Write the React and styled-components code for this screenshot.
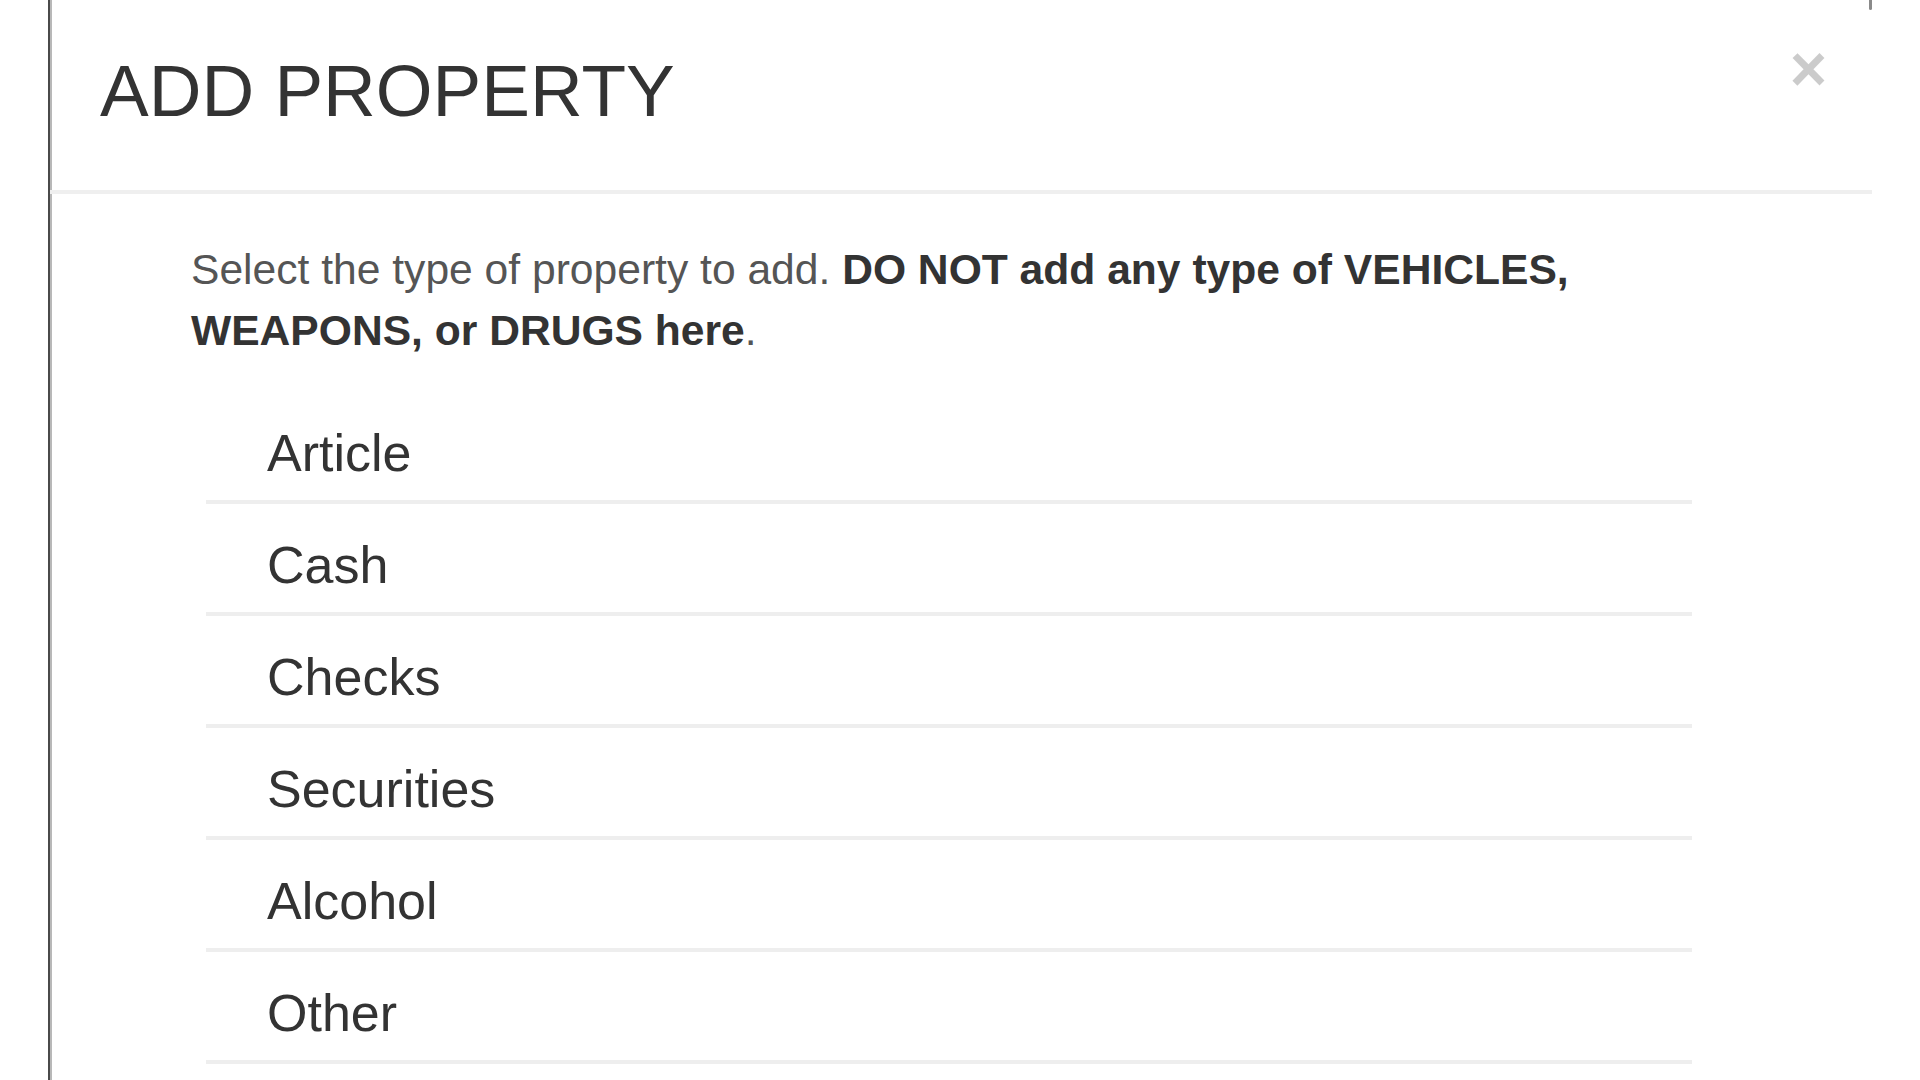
import React from 'react';
import styled, { createGlobalStyle } from 'styled-components';

const GlobalStyle = createGlobalStyle`
  html, body {
    margin: 0;
    padding: 0;
    background: #fff;
    overflow: hidden;
  }
  body {
    font-family: "Liberation Sans", Arial, Helvetica, sans-serif;
    color: #333;
  }
`

const Page = styled.div`
  width: 1920px;
  height: 1080px;
  padding-left: 48px;
  box-sizing: border-box;
  overflow: hidden;
  background: #fff;
`

const Modal = styled.div`
  position: relative;
  width: 1824px;
  min-height: 1080px;
  box-sizing: border-box;
  background: #fff;
  border-left: 2px solid #4a4a4a;
  box-shadow: inset 2px 0 0 #b8b8b8;
  &::after {
    content: '';
    position: absolute;
    top: 0;
    right: 0;
    width: 3px;
    height: 10px;
    background: #8a8a8a;
    border-radius: 0 0 2px 2px;
  }
`

const Header = styled.div`
  display: flex;
  justify-content: space-between;
  align-items: flex-start;
  padding: 51px 45px 60px 50px;
  border-bottom: 4px solid #efefef;
`

const Title = styled.h4`
  margin: 0;
  font-size: 73px;
  line-height: 79px;
  font-weight: normal;
  color: #333;
`

const Close = styled.button`
  margin-top: -14px;
  padding: 0;
  border: 0;
  background: transparent;
  font-family: "Liberation Sans", Arial, sans-serif;
  font-size: 64px;
  font-weight: bold;
  line-height: 1;
  color: #000;
  opacity: 0.2;
  cursor: pointer;
`

const Body = styled.div`
  padding: 45px 180px 0 141px;
`

const Intro = styled.p`
  margin: 0 0 31px;
  font-size: 42.6px;
  line-height: 61px;
  color: #555;
  strong {
    color: #333;
  }
`

const List = styled.div`
  display: flex;
  flex-direction: column;
  margin-left: 15px;
`

const Item = styled.a`
  display: block;
  padding: 24px 0 10px 61px;
  font-size: 52px;
  line-height: 74px;
  color: #333;
  text-decoration: none;
  border-bottom: 4px solid #eee;
  cursor: pointer;
`

const types = ['Article', 'Cash', 'Checks', 'Securities', 'Alcohol', 'Other'];

const App = () => {
  return (
    <Page>
      <GlobalStyle />
      <Modal>
        <Header>
          <Title>ADD PROPERTY</Title>
          <Close>×</Close>
        </Header>
        <Body>
          <Intro>
            Select the type of property to add. <strong>DO NOT add any type of VEHICLES, WEAPONS, or DRUGS here</strong>.
          </Intro>
          <List>
            {types.map(t => <Item key={t}>{t}</Item>)}
          </List>
        </Body>
      </Modal>
    </Page>
  )
}

export default App;
